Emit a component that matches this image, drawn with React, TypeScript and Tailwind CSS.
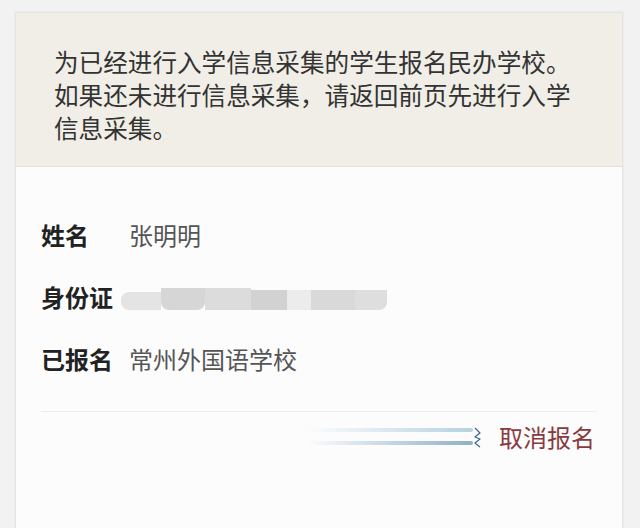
import React from "react";

export default function App() {
  const font = { fontFamily: '"Noto Sans CJK SC", "Noto Sans", sans-serif' };
  return (
    <div className="w-[640px] h-[528px] overflow-hidden bg-[#f2f2f2] pt-[12px] pl-[15px] pr-[17px]" style={font}>
      <div className="h-[600px] bg-[#fcfcfd] border border-[#e4e4e4] shadow-[0_0_2px_rgba(0,0,0,0.08)]">
        <div className="bg-[#f0eee6] border-b border-[#e2e0d8] pt-[32px] pb-[22px] pl-[38px] pr-[10px] text-[24.6px] leading-[33px] text-[#333333] whitespace-nowrap">
          <div>为已经进行入学信息采集的学生报名民办学校。</div>
          <div>如果还未进行信息采集，请返回前页先进行入学</div>
          <div>信息采集。</div>
        </div>
        <div className="pt-[37px] px-[25px]">
          <div className="flex items-center h-[62px] text-[24px]">
            <span className="w-[88px] font-bold text-[#222222]">姓名</span>
            <span className="text-[#555555]">张明明</span>
          </div>
          <div className="flex items-center h-[62px] text-[24px]">
            <span className="w-[80px] font-bold text-[#222222]">身份证</span>
            <div className="flex items-end h-[26px]">
              <div className="w-[40px] h-[18px] rounded-l-[8px] bg-[#e4e4e4]" />
              <div className="w-[44px] h-[22px] rounded-b-[8px] bg-[#d6d6d6]" />
              <div className="w-[46px] h-[22px] bg-[#dcdcdc]" />
              <div className="w-[36px] h-[20px] bg-[#d2d2d2]" />
              <div className="w-[24px] h-[20px] bg-[#ececec]" />
              <div className="w-[44px] h-[20px] bg-[#d9d9d9]" />
              <div className="w-[32px] h-[20px] rounded-br-[8px] bg-[#dedede]" />
            </div>
          </div>
          <div className="flex items-center h-[62px] text-[24px]">
            <span className="w-[88px] font-bold text-[#222222]">已报名</span>
            <span className="text-[#555555]">常州外国语学校</span>
          </div>
          <div className="mt-[21px] border-t border-[#eeeef0]" />
          <div className="flex items-center justify-end h-[50px] pr-[2px]">
            <div className="relative w-[176px] h-[26px] mr-[16px]">
              <div className="absolute left-0 right-[10px] top-[4px] h-[4px] bg-gradient-to-r from-transparent to-[#b7d2e0] rounded-full" />
              <div className="absolute left-0 right-[10px] top-[17px] h-[4px] bg-gradient-to-r from-transparent to-[#8fb0c8] rounded-full" />
              <svg className="absolute right-0 top-[2px]" width="10" height="22" viewBox="0 0 10 22" fill="none">
                <path d="M2 2 L7 7 L2 11 L7 13 L2 17 L7 21" stroke="#3a6a8a" strokeWidth="1.2" strokeLinejoin="round" />
              </svg>
            </div>
            <span className="text-[24px] text-[#8a3a3e]">取消报名</span>
          </div>
        </div>
      </div>
    </div>
  );
}
